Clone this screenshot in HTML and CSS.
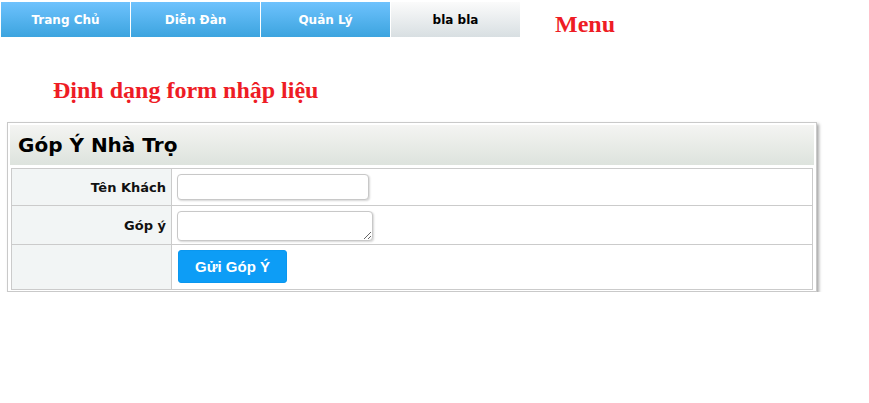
FILE: index.html
```html
<!DOCTYPE html>
<html lang="vi">
<head>
<meta charset="utf-8">
<title>Góp Ý Nhà Trọ</title>
<link rel="stylesheet" href="styles.css">
</head>
<body>
<div class="topbar">
  <ul class="menu">
    <li class="menu-item">Trang Chủ</li>
    <li class="menu-item">Diễn Đàn</li>
    <li class="menu-item">Quản Lý</li>
    <li class="menu-item menu-item-light">bla bla</li>
  </ul>
  <div class="menu-label">Menu</div>
</div>
<h2 class="page-title">Định dạng form nhập liệu</h2>
<div class="panel">
  <div class="panel-head">Góp Ý Nhà Trọ</div>
  <table class="form-table">
    <tr class="row-1">
      <th class="label">Tên Khách</th>
      <td class="field"><input class="text-input" type="text"></td>
    </tr>
    <tr class="row-2">
      <th class="label">Góp ý</th>
      <td class="field"><textarea class="text-area"></textarea></td>
    </tr>
    <tr class="row-3">
      <th class="label"></th>
      <td class="field"><button class="submit" type="button">Gửi Góp Ý</button></td>
    </tr>
  </table>
</div>
</body>
</html>
```
FILE: styles.css
```css
html, body {
  margin: 0;
  padding: 0;
  background: #fff;
}
body {
  font-family: "DejaVu Sans", Verdana, sans-serif;
}
.topbar {
  display: flex;
  align-items: flex-start;
  margin: 2px 0 0 1px;
}
.menu {
  display: flex;
  list-style: none;
  margin: 0;
  padding: 0;
}
.menu-item {
  width: 129px;
  height: 35px;
  margin-right: 1px;
  display: flex;
  align-items: center;
  justify-content: center;
  background: linear-gradient(to bottom, #6ec2fd, #3ca4df);
  color: #fff;
  font-weight: bold;
  font-size: 12px;
}
.menu-item-light {
  background: linear-gradient(to bottom, #fbfbfb, #d8dfe2);
  color: #000;
}
.menu-label {
  margin-left: 34px;
  font-family: "Liberation Serif", "Times New Roman", serif;
  font-weight: bold;
  font-size: 24px;
  line-height: 25px;
  color: #ee1c25;
  padding-top: 10px;
}
.page-title {
  margin: 39px 0 0 53px;
  font-family: "Liberation Serif", "Times New Roman", serif;
  font-weight: bold;
  font-size: 24px;
  line-height: 28px;
  color: #ee1c25;
}
.panel {
  width: 804px;
  margin: 18px 0 0 7px;
  border: 1px solid #c9c9c9;
  padding: 2px 2px 1px 2px;
  box-shadow: 2px 2px 3px #a8a8a8;
}
.panel-head {
  height: 40px;
  display: flex;
  align-items: center;
  padding-left: 8px;
  background: linear-gradient(to bottom, #f4f4f2, #dde3dd);
  font-weight: bold;
  font-size: 20px;
  color: #000;
}
.form-table {
  margin: 3px 0 0 1px;
  width: 802px;
  border-collapse: collapse;
  border: 1px solid #cbcbcb;
}
.form-table th, .form-table td {
  border: 1px solid #cbcbcb;
  padding: 0 5px;
}
.label {
  width: 149px;
  text-align: right;
  background: #f2f5f5;
  font-size: 13px;
  font-weight: bold;
  color: #111;
}
.row-1 { height: 37px; }
.row-2 { height: 39px; }
.row-3 { height: 45px; }
.field {
  background: #fff;
}
.text-input {
  display: block;
  box-sizing: border-box;
  width: 192px;
  height: 26px;
  border: 1px solid #c8c8c8;
  border-radius: 4px;
  box-shadow: 1px 1px 2px #d6d6d6;
  margin: 0;
}
.text-area {
  display: block;
  box-sizing: border-box;
  width: 196px;
  height: 30px;
  border: 1px solid #c8c8c8;
  border-radius: 4px;
  box-shadow: 1px 1px 2px #d6d6d6;
  margin: 1px 0 0 0;
  resize: both;
}
.submit {
  display: block;
  width: 109px;
  height: 33px;
  margin: -1px 0 0 1px;
  border: 1px solid #0a97ef;
  border-radius: 3px;
  background: #0d9df6;
  color: #fff;
  font-family: "Liberation Sans", Arial, sans-serif;
  font-weight: bold;
  font-size: 15px;
}
```
